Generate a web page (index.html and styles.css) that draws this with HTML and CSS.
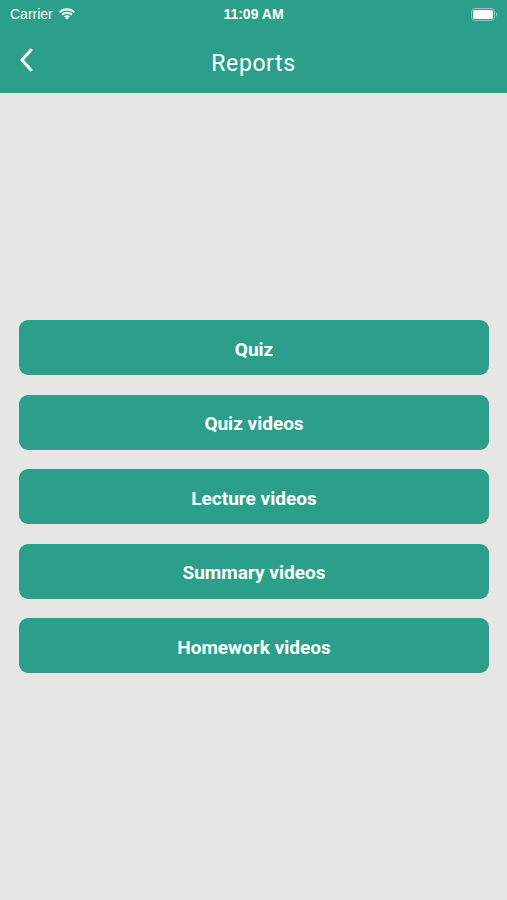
FILE: index.html
```html
<!DOCTYPE html>
<html lang="en">
<head>
    <meta charset="UTF-8">
    <meta name="viewport" content="width=device-width, initial-scale=1.0">
    <title>Reports</title>
    <link rel="stylesheet" href="styles.css">
</head>
<body>
    <div class="header">
        <div class="status-bar">
            <div class="status-left">
                <span>Carrier</span>
                <svg class="wifi" width="18" height="13" viewBox="0 0 17 12">
                    <path d="M8.5 2.2c2.4 0 4.6.9 6.3 2.5l1.3-1.4C14.1 1.3 11.4.2 8.5.2S2.9 1.3.9 3.3l1.3 1.4C3.9 3.1 6.1 2.2 8.5 2.2z" fill="#fff"/>
                    <path d="M8.5 5.4c1.5 0 2.9.6 4 1.5l1.3-1.4C12.4 4.2 10.5 3.4 8.5 3.4s-3.9.8-5.3 2.1l1.3 1.4c1.1-.9 2.5-1.5 4-1.5z" fill="#fff"/>
                    <path d="M8.5 8.5c.7 0 1.3.2 1.8.6L8.5 11 6.7 9.1c.5-.4 1.1-.6 1.8-.6z" fill="#fff"/>
                    <path d="M8.5 6.6c1.1 0 2.1.4 2.8 1.1l-1.3 1.4c-.4-.3-.9-.5-1.5-.5s-1.1.2-1.5.5L5.7 7.7c.7-.7 1.7-1.1 2.8-1.1z" fill="#fff"/>
                </svg>
            </div>
            <div class="status-time">11:09 AM</div>
            <div class="status-right">
                <svg width="27" height="13" viewBox="0 0 27 13">
                    <rect x="0.5" y="0.5" width="23" height="12" rx="3.5" fill="none" stroke="rgba(255,255,255,0.45)"/>
                    <rect x="2" y="2" width="20" height="9" rx="2" fill="#fff"/>
                    <path d="M25 4.5v4c.8-.3 1.3-1.1 1.3-2s-.5-1.7-1.3-2z" fill="rgba(255,255,255,0.45)"/>
                </svg>
            </div>
        </div>
        <div class="navbar">
            <a href="#" class="back">
                <svg width="14" height="24" viewBox="0 0 14 24">
                    <path d="M12 2L3 12l9 10" fill="none" stroke="#fff" stroke-width="3" stroke-linecap="round" stroke-linejoin="round"/>
                </svg>
            </a>
            <h1>Reports</h1>
        </div>
    </div>

    <div class="content">
        <div class="menu">
            <button class="menu-btn">Quiz</button>
            <button class="menu-btn">Quiz videos</button>
            <button class="menu-btn">Lecture videos</button>
            <button class="menu-btn">Summary videos</button>
            <button class="menu-btn">Homework videos</button>
        </div>
    </div>
</body>
</html>
```

FILE: styles.css
```css
body {
    margin: 0;
    padding: 0;
    font-family: Roboto, "Liberation Sans", sans-serif;
    background-color: #e6e7e4;
    height: 100vh;
    display: flex;
    flex-direction: column;
}

.header {
    background-color: #2c9f8b;
    color: #fff;
    height: 93px;
    flex-shrink: 0;
}

.status-bar {
    height: 28px;
    display: flex;
    align-items: center;
    justify-content: space-between;
    padding: 0 9px 0 10px;
    font-family: "Liberation Sans", Arial, sans-serif;
    font-size: 14px;
    position: relative;
}

.status-left {
    display: flex;
    align-items: center;
    gap: 5px;
    opacity: 0.95;
}

.status-time {
    position: absolute;
    left: 0;
    right: 0;
    text-align: center;
    font-weight: bold;
    font-size: 14px;
    pointer-events: none;
}

.status-right {
    display: flex;
    align-items: center;
}

.navbar {
    height: 65px;
    display: flex;
    align-items: center;
    justify-content: center;
    position: relative;
}

.navbar h1 {
    margin: 6px 0 0 0;
    font-size: 23px;
    font-weight: 400;
    letter-spacing: 0.6px;
}

.back {
    position: absolute;
    left: 19px;
    top: 20px;
    display: flex;
}

.content {
    flex: 1;
    display: flex;
    flex-direction: column;
    justify-content: center;
    padding: 0 18px 0 19px;
}

.menu {
    display: flex;
    flex-direction: column;
    gap: 19.5px;
}

.menu-btn {
    height: 55px;
    padding-top: 4px;
    border: none;
    border-radius: 9px;
    background-color: #2c9f8b;
    color: #fff;
    font-family: Roboto, "Liberation Sans", sans-serif;
    font-size: 19px;
    font-weight: bold;
    cursor: pointer;
}

.menu-btn:hover {
    background-color: #27907e;
}
```
